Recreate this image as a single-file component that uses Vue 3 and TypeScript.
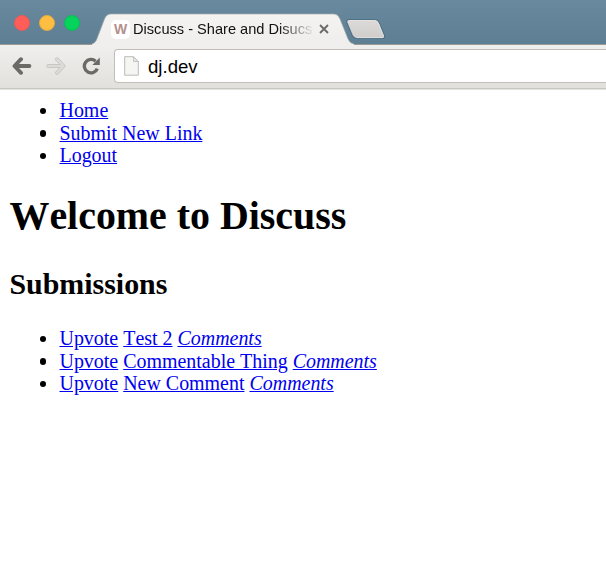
<script setup lang="ts">
interface Submission {
  id: number
  title: string
}

const lights: string[] = ['close', 'minimize', 'expand']
const navigation: string[] = ['Home', 'Submit New Link', 'Logout']
const submissions: Submission[] = [
  { id: 1, title: 'Test 2' },
  { id: 2, title: 'Commentable Thing' },
  { id: 3, title: 'New Comment' },
]
</script>

<template>
  <div class="window">
    <header class="titlebar">
      <div class="lights">
        <span v-for="light in lights" :key="light" class="light" :class="light"></span>
      </div>
      <div class="tab">
        <svg class="tab-shape" width="262" height="32" viewBox="0 0 262 32">
          <defs>
            <linearGradient id="tabFill" x1="0" y1="0" x2="0" y2="1">
              <stop offset="0" stop-color="#f4f3f2" />
              <stop offset="1" stop-color="#efeeec" />
            </linearGradient>
          </defs>
          <path d="M0 31 Q3 30 4.500 27 L12.500 6 Q14.500 1 19 1 H242 Q246 1 248 6 L256 26 Q258 30.500 262 31 V32 H0Z" fill="url(#tabFill)" />
          <path d="M0 31 Q3 30 4.500 27 L12.500 6 Q14.500 1 19 1 H242 Q246 1 248 6 L256 26 Q258 30.500 262 31" fill="none" stroke="#a5aaab" stroke-width=".7" />
        </svg>
        <div class="tab-content">
          <span class="favicon">W</span>
          <span class="tab-title">Discuss - Share and Disucs</span>
          <svg class="tab-close" width="10" height="10" viewBox="0 0 10 10">
            <path d="M1 1 L9 9 M9 1 L1 9" stroke="#6b6a69" stroke-width="1.900" />
          </svg>
        </div>
      </div>
      <svg class="new-tab" width="42" height="23" viewBox="0 0 42 23">
        <defs>
          <linearGradient id="newTabFill" x1="0" y1="0" x2="0" y2="1">
            <stop offset="0" stop-color="#dddbd9" />
            <stop offset="1" stop-color="#cfccca" />
          </linearGradient>
        </defs>
        <path d="M4 1.500 H29 Q33 1.500 34.500 5 L39.500 17.500 Q40.500 20.500 37 20.500 H12 Q8.500 20.500 7 17 L2 5 Q1 1.500 4 1.500Z" fill="url(#newTabFill)" stroke="#4f7085" stroke-width="1.200" />
        <path d="M4.500 2.500 H29 Q32 2.500 33.500 5.500 L38.500 18 Q39 19.600 37 19.600 H12" fill="none" stroke="#e4e3e1" stroke-width=".8" />
      </svg>
    </header>

    <div class="toolbar">
      <svg class="icon back" width="20" height="18" viewBox="0 0 20 18">
        <path d="M9 2.200 L2.500 9 L9 15.800 M3 9 H17.400" fill="none" stroke="#6b6a66" stroke-width="3.900" stroke-linecap="round" stroke-linejoin="round" />
      </svg>
      <svg class="icon forward" width="20" height="18" viewBox="0 0 20 18">
        <path d="M11 2.200 L17.500 9 L11 15.800 M17 9 H2.200" fill="none" stroke="#c8c7c3" stroke-width="3.900" stroke-linecap="round" stroke-linejoin="round" />
        <path d="M11 2.200 L17.500 9 L11 15.800 M17 9 H2.200" fill="none" stroke="#dddcd9" stroke-width="2.200" stroke-linecap="round" stroke-linejoin="round" />
      </svg>
      <svg class="icon reload" width="19" height="18" viewBox="0 0 19 18">
        <path d="M13.600 4.200 A6.700 6.700 0 1 0 15.300 11.600" fill="none" stroke="#6b6a66" stroke-width="3.300" />
        <path d="M17.800 .6 V8 H10.400 Z" fill="#6b6a66" />
      </svg>
      <div class="address">
        <svg class="page-icon" width="15" height="20" viewBox="0 0 15 20">
          <path d="M.7 .7 H9.500 L14.300 5.500 V19.200 H.7Z" fill="#f5f5f4" stroke="#bcbbb9" />
          <path d="M9.500 .7 V5.500 H14.300Z" fill="#e6e5e3" stroke="#bcbbb9" stroke-width=".8" />
        </svg>
        <span class="url">dj.dev</span>
      </div>
    </div>

    <main class="page">
      <ul class="nav">
        <li v-for="item in navigation" :key="item"><a href="#">{{ item }}</a></li>
      </ul>
      <h1>Welcome to Discuss</h1>
      <h2>Submissions</h2>
      <ul>
        <li v-for="submission in submissions" :key="submission.id">
          <a href="#">Upvote</a>&#32;<a href="#">{{ submission.title }}</a>&#32;<a href="#"><em>Comments</em></a>
        </li>
      </ul>
    </main>
  </div>
</template>

<style>
body {
  background: #fff;
  overflow: hidden;
}
</style>

<style scoped>
.window {
  height: 565px;
  overflow: hidden;
  background: #fff;
}

.titlebar {
  box-sizing: border-box;
  display: flex;
  height: 45px;
  padding-left: 14px;
  background: linear-gradient(#69899f, #5d7e93);
  border-bottom: 1px solid #9b9a94;
}

.lights {
  display: flex;
  gap: 9.2px;
  width: 78px;
  padding-top: 15px;
}

.light {
  box-sizing: border-box;
  width: 15.8px;
  height: 15.8px;
  border-radius: 50%;
}

.close {
  background: #fe5e58;
  border: 1px solid #e9585a;
}

.minimize {
  background: #fdbe41;
  border: 1px solid #e5aa42;
}

.expand {
  background: #05d35b;
  border: 1px solid #0cba58;
}

.tab {
  display: grid;
  height: 32px;
  width: 262px;
  margin-top: 13px;
}

.tab-shape,
.tab-content {
  grid-area: 1 / 1;
}

.tab-content {
  display: flex;
  align-items: center;
  height: 32px;
  padding-left: 19px;
}

.favicon {
  width: 19px;
  height: 19px;
  margin-top: 1px;
  border-radius: 5px;
  background: #fff;
  color: #b58f8c;
  font: bold 14px/19px "Liberation Sans", sans-serif;
  text-align: center;
}

.tab-title {
  width: 184px;
  margin-left: 3px;
  color: #111;
  font: 14.6px/20px "Liberation Sans", sans-serif;
  white-space: nowrap;
  -webkit-mask-image: linear-gradient(90deg, #000 145px, transparent 182px);
  mask-image: linear-gradient(90deg, #000 145px, transparent 182px);
}

.tab-close {
  margin-left: 2px;
}

.new-tab {
  margin: 18px 0 0 -9px;
}

.toolbar {
  box-sizing: border-box;
  display: flex;
  align-items: flex-start;
  height: 45px;
  padding-left: 12px;
  background: linear-gradient(#f0efed, #e1e0dd);
  border-bottom: 1px solid #e4e2df;
  box-shadow: inset 0 -1px #c9c7c2;
}

.icon {
  flex: none;
  margin-top: 12px;
}

.forward {
  margin-left: 14px;
}

.reload {
  margin-left: 16px;
}

.address {
  box-sizing: border-box;
  display: flex;
  flex: 1;
  align-items: flex-start;
  height: 34px;
  margin: 4px 0 0 13px;
  padding-left: 9px;
  background: #fff;
  border: 1px solid #c1beb9;
  border-right: 0;
  border-radius: 4px 0 0 4px;
}

.page-icon {
  margin-top: 6px;
}

.url {
  margin-left: 9px;
  color: #000;
  font: 18.6px/33px "Liberation Sans", sans-serif;
}

.page {
  padding: 9px 9.500px 0;
  color: #000;
  font: 19.95px/22.5px "Liberation Serif", serif;
  font-kerning: none;
}

ul {
  margin: 0;
  padding-left: 50px;
  list-style: none;
}

li {
  display: flex;
  gap: 5px;
}

li::before {
  content: "";
  width: 6.5px;
  height: 6.5px;
  margin: 8.5px 8.5px 0 -20px;
  border-radius: 50%;
  background: #000;
}

a {
  color: #00e;
  text-decoration: underline;
}

h1 {
  margin: 26.5px 0 0;
  font-size: 39.9px;
  line-height: 46px;
}

h2 {
  margin: 28px 0 26px;
  font-size: 29.9px;
  line-height: 34px;
}
</style>
